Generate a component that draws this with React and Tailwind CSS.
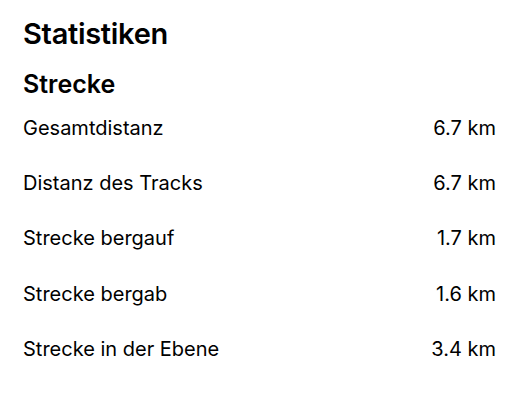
import React from "react";

const rows = [
  { label: "Gesamtdistanz", value: "6.7 km" },
  { label: "Distanz des Tracks", value: "6.7 km" },
  { label: "Strecke bergauf", value: "1.7 km" },
  { label: "Strecke bergab", value: "1.6 km" },
  { label: "Strecke in der Ebene", value: "3.4 km" },
];

const App = () => {
  return (
    <div className="w-[519px] h-[400px] bg-white text-black font-['Inter',sans-serif] pl-[23px] pr-[23px] pt-[14px]">
      <h1 className="text-[29px] font-semibold leading-[40px] tracking-[-0.3px]">Statistiken</h1>
      <h2 className="text-[25px] font-semibold leading-[32px] mt-[14px]">Strecke</h2>
      <div>
        {rows.map((row) => (
          <div key={row.label} className="flex items-center justify-between h-[55.3px] text-[20px]">
            <span>{row.label}</span>
            <span>{row.value}</span>
          </div>
        ))}
      </div>
    </div>
  );
};

export default App;
